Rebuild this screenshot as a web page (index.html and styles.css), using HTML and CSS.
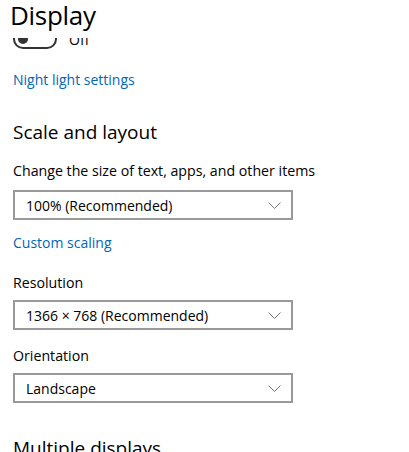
FILE: index.html
```html
<!DOCTYPE html>
<html>
<head>
<meta charset="utf-8">
<link rel="stylesheet" href="styles.css">
</head>
<body>
<div class="page">
  <header class="header"><h1 class="title">Display</h1></header>
  <main class="viewport">
    <div class="content">
      <div class="toggle-row">
        <span class="toggle"><span class="knob"></span></span>
        <span class="toggle-label">Off</span>
      </div>
      <a class="link link-night">Night light settings</a>
      <h2 class="section">Scale and layout</h2>
      <div class="label label-first">Change the size of text, apps, and other items</div>
      <div class="select select-first">
        <span>100% (Recommended)</span>
        <svg class="chev" width="13" height="7" viewBox="0 0 13 7"><path d="M0.5 0.5 L6.5 6.5 L12.5 0.5" fill="none" stroke="#777" stroke-width="1"/></svg>
      </div>
      <a class="link link-custom">Custom scaling</a>
      <div class="label label-res">Resolution</div>
      <div class="select">
        <span>1366 × 768 (Recommended)</span>
        <svg class="chev" width="13" height="7" viewBox="0 0 13 7"><path d="M0.5 0.5 L6.5 6.5 L12.5 0.5" fill="none" stroke="#777" stroke-width="1"/></svg>
      </div>
      <div class="label label-orient">Orientation</div>
      <div class="select">
        <span>Landscape</span>
        <svg class="chev" width="13" height="7" viewBox="0 0 13 7"><path d="M0.5 0.5 L6.5 6.5 L12.5 0.5" fill="none" stroke="#777" stroke-width="1"/></svg>
      </div>
      <h2 class="section section-multi">Multiple displays</h2>
    </div>
  </main>
</div>
</body>
</html>
```

FILE: styles.css
```css
html, body {
  margin: 0;
  padding: 0;
  background: #fff;
}
body {
  font-family: "Open Sans", "Noto Sans", sans-serif;
  color: #000;
  width: 409px;
  height: 452px;
  overflow: hidden;
}
.page {
  display: flex;
  flex-direction: column;
  height: 452px;
}
.header {
  height: 38px;
  flex: 0 0 38px;
  background: #fff;
  padding-left: 10px;
  overflow: hidden;
}
.title {
  margin: 0;
  font-size: 26px;
  font-weight: 400;
  line-height: 34px;
  margin-top: -2px;
  letter-spacing: -0.3px;
}
.viewport {
  flex: 1;
  overflow: hidden;
}
.content {
  margin-top: -9px;
  padding-left: 13px;
  display: flex;
  flex-direction: column;
  align-items: flex-start;
}
.toggle-row {
  display: flex;
  align-items: center;
  height: 20px;
}
.toggle {
  box-sizing: border-box;
  width: 44px;
  height: 20px;
  border: 2px solid #333;
  border-radius: 10px;
  display: flex;
  align-items: center;
  padding-left: 3px;
}
.knob {
  width: 10px;
  height: 10px;
  border-radius: 50%;
  background: #333;
}
.toggle-label {
  margin-left: 12px;
  font-size: 14px;
}
.link {
  color: #0067b8;
  font-size: 14px;
  line-height: 20px;
}
.link-night {
  margin-top: 21px;
}
.section {
  margin: 29px 0 0;
  font-size: 19px;
  font-weight: 400;
  line-height: 26px;
}
.label {
  font-size: 14.2px;
  line-height: 20px;
}
.label-first {
  margin-top: 16px;
}
.select {
  box-sizing: border-box;
  width: 280px;
  height: 30px;
  border: 2px solid #999;
  display: flex;
  align-items: center;
  justify-content: space-between;
  padding: 0 10px 0 11px;
  font-size: 14px;
  margin-top: 7px;
}
.select-first {
  margin-top: 9px;
}
.chev {
  display: block;
}
.link-custom {
  margin-top: 13px;
}
.label-res {
  margin-top: 20px;
}
.label-orient {
  margin-top: 16px;
}
.section-multi {
  margin-top: 32px;
}
```
